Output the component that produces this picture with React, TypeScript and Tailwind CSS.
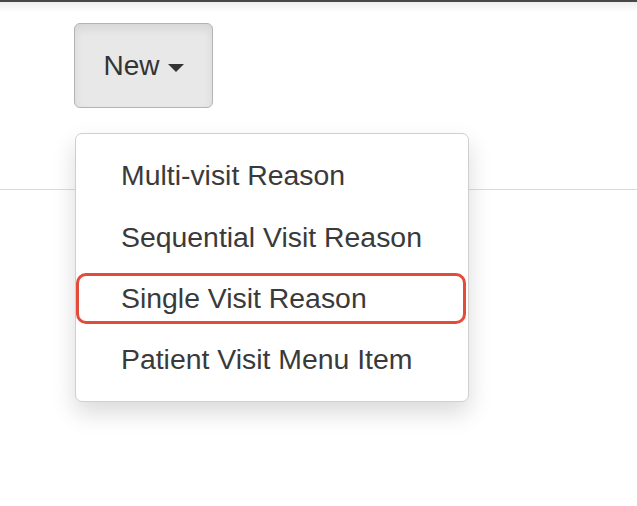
import React from "react";

const items = [
  "Multi-visit Reason",
  "Sequential Visit Reason",
  "Single Visit Reason",
  "Patient Visit Menu Item",
];

export default function App() {
  return (
    <div
      className="relative w-[637px] h-[506px] overflow-hidden bg-white text-[#333]"
      style={{ fontFamily: '"Liberation Sans", Arial, sans-serif' }}
    >
      <div className="h-[2px] bg-[#484848]" />
      <div className="h-[10px] bg-gradient-to-b from-[#efefef] to-white" />
      <div className="pl-[74px] pt-[11px]">
        <button className="flex h-[85px] w-[139px] items-center justify-center gap-[8px] rounded-[6px] border border-[#b3b3b3] bg-[#e8e8e8] shadow-[inset_0_5px_9px_rgba(0,0,0,0.08)]">
          <span className="text-[28px] leading-none text-[#333]">New</span>
          <span className="mt-[4px] h-0 w-0 border-x-[8px] border-t-[8px] border-x-transparent border-t-[#333]" />
        </button>
      </div>
      <div className="mt-[81px] border-t-[1.5px] border-[#dcdcdc]" />

      <div className="absolute left-[75px] top-[133px] w-[394px] h-[269px] rounded-[7px] border border-[#cfcfcf] bg-white pt-[11px] shadow-[0_11px_23px_rgba(0,0,0,0.15)]">
        {items.map((t, i) => (
          <div key={t} className="relative flex h-[61.3px] items-center pl-[45px] text-[28.4px] leading-none text-[#3a3a3a]">
            {t}
            {i === 2 && (
              <div className="absolute left-0 right-[2px] top-[5.5px] bottom-[5px] rounded-[10px] border-[3px] border-[#e34c3a]" />
            )}
          </div>
        ))}
      </div>
    </div>
  );
}
